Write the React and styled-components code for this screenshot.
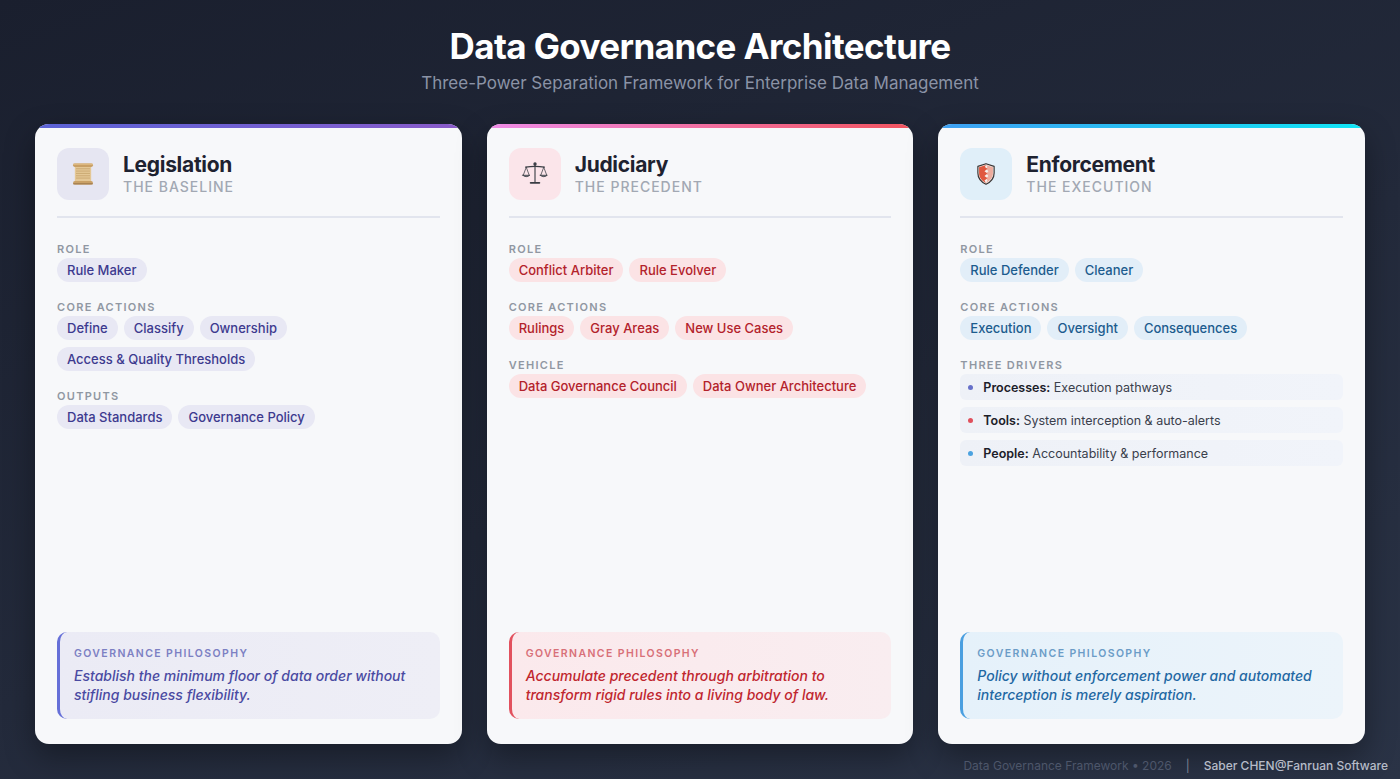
import styled, { createGlobalStyle } from 'styled-components';

const GlobalStyle = createGlobalStyle`
  html, body {
    margin: 0;
    padding: 0;
    background: #1c2232;
  }
  * {
    box-sizing: border-box;
  }
`;

const Page = styled.div`
  width: 100%;
  min-height: 100vh;
  padding: 24px 35px 0;
  font-family: Inter, "Noto Sans", sans-serif;
  background: linear-gradient(160deg, #1a1f2e 0%, #232a3b 55%, #2a3346 100%);
  display: flex;
  flex-direction: column;
`;

const Header = styled.header`
  text-align: center;
`;

const Title = styled.h1`
  margin: 0;
  font-size: 35px;
  line-height: 44px;
  font-weight: 700;
  letter-spacing: -0.6px;
  color: #ffffff;
`;

const Subtitle = styled.p`
  margin: 3px 0 0;
  font-size: 17px;
  line-height: 24px;
  font-weight: 400;
  color: #8b93a6;
`;

const Grid = styled.div`
  margin-top: 29px;
  display: grid;
  grid-template-columns: repeat(3, 1fr);
  gap: 25px;
`;

const Card = styled.section`
  height: 620px;
  border-radius: 14px;
  overflow: hidden;
  background: #f7f8fa;
  box-shadow: 0 12px 30px rgba(0, 0, 0, 0.35);
  display: flex;
  flex-direction: column;
`;

const TopBar = styled.div`
  height: 4px;
  flex-shrink: 0;
  background: ${(p) => p.$gradient};
`;

const Body = styled.div`
  flex: 1;
  padding: 20px 22px 25px;
  display: flex;
  flex-direction: column;
`;

const CardHead = styled.div`
  display: flex;
  align-items: center;
  gap: 14px;
  padding-bottom: 16px;
  border-bottom: 2px solid #e2e5ee;
  margin-bottom: 24px;
`;

const IconBox = styled.div`
  width: 52px;
  height: 52px;
  border-radius: 12px;
  background: ${(p) => p.$bg};
  display: flex;
  align-items: center;
  justify-content: center;
  flex-shrink: 0;
`;

const HeadText = styled.div`
  display: flex;
  flex-direction: column;
`;

const CardTitle = styled.h2`
  margin: 0;
  font-size: 21px;
  line-height: 26px;
  font-weight: 700;
  letter-spacing: -0.3px;
  color: #1e2230;
`;

const CardTag = styled.div`
  font-size: 14px;
  line-height: 18px;
  font-weight: 500;
  letter-spacing: 1px;
  color: #a2a8b3;
`;

const Section = styled.div`
  & + & {
    margin-top: 18px;
  }
`;

const Label = styled.div`
  font-size: 11px;
  line-height: 14px;
  font-weight: 600;
  letter-spacing: 1.3px;
  text-transform: uppercase;
  color: #9097a2;
  margin-bottom: 2px;
`;

const Chips = styled.div`
  display: flex;
  flex-wrap: wrap;
  gap: 7px 6px;
`;

const Chip = styled.span`
  height: 24px;
  display: inline-flex;
  align-items: center;
  padding: 0 10px;
  border-radius: 12px;
  font-size: 13px;
  font-weight: 500;
  color: ${(p) => p.$color};
  background: ${(p) => p.$bg};
`;

const Drivers = styled.div`
  display: flex;
  flex-direction: column;
  gap: 7px;
`;

const Driver = styled.div`
  height: 26px;
  display: flex;
  align-items: center;
  gap: 10px;
  padding-left: 8px;
  border-radius: 6px;
  background: linear-gradient(90deg, #eef1f7 0%, #f1f4fa 100%);
  font-size: 12.5px;
  color: #3a404c;

  b {
    font-weight: 600;
    color: #1c2029;
  }
`;

const Dot = styled.span`
  width: 5px;
  height: 5px;
  border-radius: 50%;
  background: ${(p) => p.$color};
  flex-shrink: 0;
`;

const Philosophy = styled.div`
  margin-top: auto;
  padding: 15px 16px 15px 14px;
  border-left: 3px solid ${(p) => p.$accent};
  border-radius: 10px;
  background: ${(p) => p.$bg};
`;

const PhiloLabel = styled.div`
  font-size: 10.5px;
  line-height: 14px;
  font-weight: 600;
  letter-spacing: 1.4px;
  color: ${(p) => p.$color};
`;

const PhiloText = styled.p`
  margin: 5px 0 0;
  font-size: 14px;
  line-height: 19px;
  font-style: italic;
  font-weight: 500;
  color: ${(p) => p.$color};
`;

const Footer = styled.footer`
  margin-top: 14px;
  padding-right: 0;
  margin-right: -23px;
  display: flex;
  justify-content: flex-end;
  align-items: center;
  font-size: 12px;
  line-height: 16px;
`;

const FooterMuted = styled.span`
  color: #4d566a;
`;

const FooterSep = styled.span`
  color: #7a8294;
  margin: 0 14px;
`;

const FooterStrong = styled.span`
  color: #b6bcc8;
  font-weight: 500;
`;

const ScrollIcon = () => (
  <svg width="28" height="28" viewBox="0 0 24 24">
    <rect x="5" y="5" width="14" height="14" fill="#e4c795" />
    {[7.5, 9.5, 11.5, 13.5, 15.5].map((y) => (
      <line key={y} x1="6" x2="18" y1={y} y2={y} stroke="#c29d66" strokeWidth="0.6" />
    ))}
    <rect x="3.5" y="3" width="17" height="3" rx="1.5" fill="#c9a066" />
    <rect x="3.5" y="3" width="17" height="1.2" rx="0.6" fill="#dcb77f" />
    <rect x="3.5" y="18" width="17" height="3" rx="1.5" fill="#c9a066" />
    <rect x="3.5" y="19.8" width="17" height="1.2" rx="0.6" fill="#a98352" />
  </svg>
);

const ScalesIcon = () => (
  <svg width="30" height="30" viewBox="0 0 24 24" fill="none" stroke="#3a3d44" strokeWidth="0.9" strokeLinecap="round">
    <line x1="12" y1="3.5" x2="12" y2="18.5" />
    <circle cx="12" cy="4" r="0.9" fill="#3a3d44" />
    <path d="M4.5 6.5 Q12 5.2 19.5 6.5" />
    <path d="M5 6.6 L2.6 13 M5 6.6 L7.4 13" strokeWidth="0.6" />
    <path d="M19 6.6 L16.6 13 M19 6.6 L21.4 13" strokeWidth="0.6" />
    <path d="M2.2 13 H7.8 Q5 15.4 2.2 13 Z" fill="#6b6f78" strokeWidth="0.6" />
    <path d="M16.2 13 H21.8 Q19 15.4 16.2 13 Z" fill="#6b6f78" strokeWidth="0.6" />
    <path d="M8.5 19 H15.5" strokeWidth="1.4" />
  </svg>
);

const ShieldIcon = () => (
  <svg width="26" height="26" viewBox="0 0 24 24">
    <path d="M12 2.5 L19.5 5 V11 C19.5 16 16 19.5 12 21.5 C8 19.5 4.5 16 4.5 11 V5 Z" fill="#f4f1ee" stroke="#3b3535" strokeWidth="1.1" strokeLinejoin="round" />
    <path d="M12 3.6 L5.6 5.8 V11 C5.6 15.3 8.4 18.4 12 20.3 L10.6 18 L13.4 16 L10.6 13.8 L13.4 11.6 L10.6 9.4 L13.4 7.2 L11 5.5 Z" fill="#e0583f" />
    <path d="M12 3.6 L18.4 5.8 V11 C18.4 15.3 15.6 18.4 12 20.3 L13.4 18 L12.2 16 L14.2 13.8 L12.2 11.6 L14.2 9.4 L12.2 7.2 L13.4 5.5 Z" fill="#e8735d" opacity="0.55" />
  </svg>
);

const themes = {
  legislation: {
    gradient: 'linear-gradient(90deg, #5b63d6 0%, #7b5fd0 70%, #8a5bc8 100%)',
    iconBg: '#e6e6f2',
    chipColor: '#3d3a8f',
    chipBg: '#e8e8f4',
    accent: '#6670d8',
    philoBg: 'linear-gradient(90deg, #ebebf5 0%, #eeeef6 100%)',
    philoLabel: '#7c80c3',
    philoText: '#4a4aa2',
  },
  judiciary: {
    gradient: 'linear-gradient(90deg, #ee8de8 0%, #f26a94 60%, #f2545f 100%)',
    iconBg: '#fbe5ea',
    chipColor: '#b3222b',
    chipBg: '#fbe3e5',
    accent: '#e2515e',
    philoBg: 'linear-gradient(90deg, #fbe9ec 0%, #f9edf0 100%)',
    philoLabel: '#d87078',
    philoText: '#c0262e',
  },
  enforcement: {
    gradient: 'linear-gradient(90deg, #3fa0f3 0%, #22c8f2 60%, #10e6f6 100%)',
    iconBg: '#e0eff9',
    chipColor: '#1c5c8e',
    chipBg: '#e2eef8',
    accent: '#4a9fe0',
    philoBg: 'linear-gradient(90deg, #e5f1fa 0%, #ecf4fa 100%)',
    philoLabel: '#6b9cc7',
    philoText: '#1f68a3',
  },
};

const cards = [
  {
    key: 'legislation',
    icon: <ScrollIcon />,
    title: 'Legislation',
    tag: 'THE BASELINE',
    sections: [
      { label: 'Role', chips: ['Rule Maker'] },
      { label: 'Core Actions', chips: ['Define', 'Classify', 'Ownership', 'Access & Quality Thresholds'] },
      { label: 'Outputs', chips: ['Data Standards', 'Governance Policy'] },
    ],
    philosophy: 'Establish the minimum floor of data order without stifling business flexibility.',
  },
  {
    key: 'judiciary',
    icon: <ScalesIcon />,
    title: 'Judiciary',
    tag: 'THE PRECEDENT',
    sections: [
      { label: 'Role', chips: ['Conflict Arbiter', 'Rule Evolver'] },
      { label: 'Core Actions', chips: ['Rulings', 'Gray Areas', 'New Use Cases'] },
      { label: 'Vehicle', chips: ['Data Governance Council', 'Data Owner Architecture'] },
    ],
    philosophy: 'Accumulate precedent through arbitration to transform rigid rules into a living body of law.',
  },
  {
    key: 'enforcement',
    icon: <ShieldIcon />,
    title: 'Enforcement',
    tag: 'THE EXECUTION',
    sections: [
      { label: 'Role', chips: ['Rule Defender', 'Cleaner'] },
      { label: 'Core Actions', chips: ['Execution', 'Oversight', 'Consequences'] },
      {
        label: 'Three Drivers',
        drivers: [
          { name: 'Processes:', text: 'Execution pathways', color: '#6670c9' },
          { name: 'Tools:', text: 'System interception & auto-alerts', color: '#e0505c' },
          { name: 'People:', text: 'Accountability & performance', color: '#4ba2e0' },
        ],
      },
    ],
    philosophy: 'Policy without enforcement power and automated interception is merely aspiration.',
  },
];

function PowerCard({ card }) {
  const t = themes[card.key];
  return (
    <Card>
      <TopBar $gradient={t.gradient} />
      <Body>
        <CardHead>
          <IconBox $bg={t.iconBg}>{card.icon}</IconBox>
          <HeadText>
            <CardTitle>{card.title}</CardTitle>
            <CardTag>{card.tag}</CardTag>
          </HeadText>
        </CardHead>

        {card.sections.map((s) => (
          <Section key={s.label}>
            <Label>{s.label}</Label>
            {s.chips && (
              <Chips>
                {s.chips.map((c) => (
                  <Chip key={c} $color={t.chipColor} $bg={t.chipBg}>{c}</Chip>
                ))}
              </Chips>
            )}
            {s.drivers && (
              <Drivers>
                {s.drivers.map((d) => (
                  <Driver key={d.name}>
                    <Dot $color={d.color} />
                    <span><b>{d.name}</b> {d.text}</span>
                  </Driver>
                ))}
              </Drivers>
            )}
          </Section>
        ))}

        <Philosophy $accent={t.accent} $bg={t.philoBg}>
          <PhiloLabel $color={t.philoLabel}>GOVERNANCE PHILOSOPHY</PhiloLabel>
          <PhiloText $color={t.philoText}>{card.philosophy}</PhiloText>
        </Philosophy>
      </Body>
    </Card>
  );
}

export default function App() {
  return (
    <>
      <GlobalStyle />
      <Page>
        <Header>
          <Title>Data Governance Architecture</Title>
          <Subtitle>Three-Power Separation Framework for Enterprise Data Management</Subtitle>
        </Header>
        <Grid>
          {cards.map((c) => (
            <PowerCard key={c.key} card={c} />
          ))}
        </Grid>
        <Footer>
          <FooterMuted>Data Governance Framework • 2026</FooterMuted>
          <FooterSep>|</FooterSep>
          <FooterStrong>Saber CHEN@Fanruan Software</FooterStrong>
        </Footer>
      </Page>
    </>
  );
}
